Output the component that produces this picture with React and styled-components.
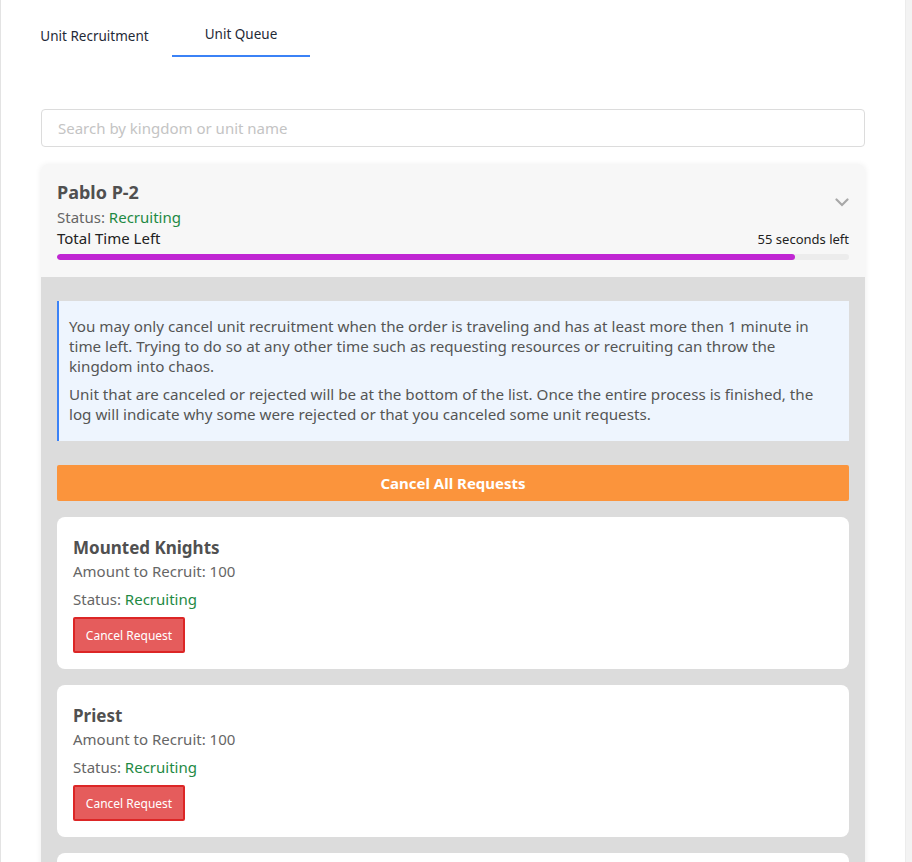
import React from "react";
import styled, { createGlobalStyle } from "styled-components";

const Global = createGlobalStyle`
  html, body { margin: 0; padding: 0; background: #f3f3f3; }
  body { font-family: "Noto Sans", "Open Sans", sans-serif; }
  * { box-sizing: border-box; }
`;

const Frame = styled.div`
  width: 906px;
  min-height: 862px;
  background: #fff;
  border-left: 1px solid #e3e3e3;
  border-right: 1px solid #ececec;
`;

const TabList = styled.div`
  display: flex;
  padding-left: 16px;
  height: 57px;
`;

const Tab = styled.div`
  width: ${(p) => p.$w}px;
  display: flex;
  align-items: center;
  justify-content: center;
  padding-top: ${(p) => (p.$active ? 13 : 16)}px;
  font-size: 13.5px;
  color: #1f2937;
  border-bottom: 2px solid ${(p) => (p.$active ? "#3b82f6" : "transparent")};
  align-self: stretch;
`;

const Content = styled.div`
  padding: 52px 40px 0 40px;
  display: flex;
  flex-direction: column;
  gap: 17px;
`;

const Search = styled.input`
  height: 38px;
  width: 100%;
  border: 1px solid #dcdcdc;
  border-radius: 4px;
  padding: 0 16px;
  font-family: inherit;
  font-size: 15px;
  color: #333;
  background: #fff;
  outline: none;
  &::placeholder { color: #c4c4c4; }
`;

const Accordion = styled.div`
  display: flex;
  flex-direction: column;
  box-shadow: 0 1px 6px rgba(0, 0, 0, 0.08);
  border-radius: 6px 6px 0 0;
`;

const Header = styled.div`
  background: #f7f7f7;
  padding: 15px 16px 17px 16px;
  border-radius: 6px 6px 0 0;
  position: relative;
`;

const Title = styled.div`
  font-size: 18px;
  font-weight: 700;
  color: #505050;
  line-height: 26px;
`;

const Line = styled.div`
  font-size: 15px;
  color: ${(p) => p.$color || "#666"};
  line-height: 22px;
  margin-top: ${(p) => p.$mt || 0}px;
`;

const Green = styled.span`
  color: #1e8a44;
`;

const TimeRow = styled.div`
  display: flex;
  justify-content: space-between;
  align-items: baseline;
  line-height: 22px;
  margin-top: -1px;
`;

const TimeLabel = styled.span`
  font-size: 15px;
  color: #222;
`;

const TimeValue = styled.span`
  font-size: 13px;
  color: #222;
`;

const Track = styled.div`
  margin-top: 4px;
  height: 6px;
  background: #ececec;
  border-radius: 3px;
  overflow: hidden;
`;

const Fill = styled.div`
  height: 100%;
  background: #c026d3;
  border-radius: 3px;
`;

const Chevron = styled.svg`
  position: absolute;
  right: 16px;
  top: 34px;
`;

const Body = styled.div`
  background: #dcdcdc;
  padding: 24px 16px 16px 16px;
  display: flex;
  flex-direction: column;
  gap: 16px;
  min-height: 600px;
`;

const Info = styled.div`
  background: #eef5fe;
  border-left: 2px solid #3b82f6;
  padding: 15px 16px 17px 10px;
  font-size: 15.2px;
  line-height: 20px;
  color: #555;
  margin-bottom: 8px;
  p { margin: 0; }
  p + p { margin-top: 8px; }
`;

const CancelAll = styled.button`
  height: 36px;
  border: none;
  border-radius: 2px;
  background: #fb943c;
  color: #fff;
  font-family: inherit;
  font-weight: 700;
  font-size: 15px;
  width: 100%;
`;

const Card = styled.div`
  background: #fff;
  border-radius: 8px;
  padding: 18px 16px 16px 16px;
  display: flex;
  flex-direction: column;
  align-items: flex-start;
`;

const CardTitle = styled.div`
  font-size: 17px;
  font-weight: 700;
  color: #505050;
  line-height: 25px;
`;

const CancelBtn = styled.button`
  margin-top: 7px;
  height: 36px;
  width: 112px;
  background: #e55c5c;
  border: 2px solid #dc2626;
  border-radius: 2px;
  color: #fff;
  font-family: inherit;
  font-size: 12px;
`;

const units = ["Mounted Knights", "Priest", "Archers"];

export default function App() {
  return (
    <>
      <Global />
      <Frame>
        <TabList>
          <Tab $w={155}>Unit Recruitment</Tab>
          <Tab $w={138} $active>Unit Queue</Tab>
        </TabList>
        <Content>
          <Search placeholder="Search by kingdom or unit name" />
          <Accordion>
            <Header>
              <Title>Pablo P-2</Title>
              <Line $mt={1}>
                Status: <Green>Recruiting</Green>
              </Line>
              <TimeRow>
                <TimeLabel>Total Time Left</TimeLabel>
                <TimeValue>55 seconds left</TimeValue>
              </TimeRow>
              <Track>
                <Fill style={{ width: "93.2%" }} />
              </Track>
              <Chevron width="14" height="9" viewBox="0 0 14 9">
                <path d="M1.5 1.5 L7 7 L12.5 1.5" fill="none" stroke="#a8a8a8" strokeWidth="2.2" strokeLinecap="round" />
              </Chevron>
            </Header>
            <Body>
              <Info>
                <p>
                  You may only cancel unit recruitment when the order is traveling and has at least more then 1 minute in time left. Trying to do so at any other time such as requesting resources or recruiting can throw the kingdom into chaos.
                </p>
                <p>
                  Unit that are canceled or rejected will be at the bottom of the list. Once the entire process is finished, the log will indicate why some were rejected or that you canceled some unit requests.
                </p>
              </Info>
              <CancelAll>Cancel All Requests</CancelAll>
              {units.map((u) => (
                <Card key={u}>
                  <CardTitle>{u}</CardTitle>
                  <Line>Amount to Recruit: 100</Line>
                  <Line $mt={6}>
                    Status: <Green>Recruiting</Green>
                  </Line>
                  <CancelBtn>Cancel Request</CancelBtn>
                </Card>
              ))}
            </Body>
          </Accordion>
        </Content>
      </Frame>
    </>
  );
}
